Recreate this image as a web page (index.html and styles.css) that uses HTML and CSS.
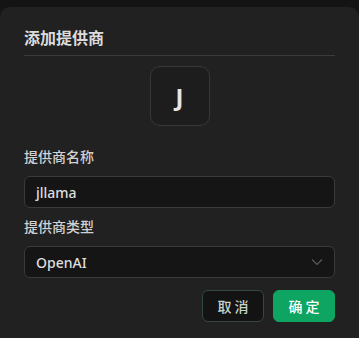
FILE: index.html
```html
<!DOCTYPE html>
<html lang="zh">
<head>
<meta charset="utf-8">
<link rel="stylesheet" href="styles.css">
</head>
<body>
<div class="dialog">
  <h2 class="title">添加提供商</h2>
  <div class="divider"></div>
  <div class="avatar-row"><div class="avatar">J</div></div>
  <label class="label label-first">提供商名称</label>
  <div class="input">jllama</div>
  <label class="label">提供商类型</label>
  <div class="input select">
    <span>OpenAI</span>
    <svg class="chev" width="12" height="8" viewBox="0 0 12 8"><path d="M1 1.5 L6 6.5 L11 1.5" fill="none" stroke="#5a5a5a" stroke-width="1.2"/></svg>
  </div>
  <div class="actions">
    <button class="btn btn-cancel">取消</button>
    <button class="btn btn-ok">确定</button>
  </div>
</div>
</body>
</html>
```
FILE: styles.css
```css
html, body {
  margin: 0;
  padding: 0;
  background: #141414;
  height: 100%;
  overflow: hidden;
}
body {
  font-family: "Noto Sans CJK SC", "Noto Sans", sans-serif;
}
.dialog {
  box-sizing: border-box;
  margin-top: 7px;
  background: #212121;
  border-radius: 10px 10px 0 0;
  padding: 18px 24px 0 24px;
  height: calc(100% - 7px);
  display: flex;
  flex-direction: column;
}
.title {
  margin: 0;
  font-size: 16px;
  line-height: 24px;
  font-weight: 700;
  color: #dcdcdc;
}
.divider {
  margin-top: 6px;
  height: 1px;
  background: #3c3c3c;
}
.avatar-row {
  display: flex;
  justify-content: center;
  margin-top: 10px;
}
.avatar {
  width: 58px;
  height: 58px;
  border: 1px solid #383838;
  border-radius: 10px;
  background: #1d1d1d;
  display: flex;
  align-items: center;
  justify-content: center;
  font-family: "Noto Sans", sans-serif;
  font-weight: 700;
  font-size: 24px;
  color: #e6e6e6;
}
.label {
  display: block;
  margin-top: 8px;
  font-size: 14px;
  line-height: 20px;
  font-weight: 500;
  color: #d2d2d2;
}
.label-first {
  margin-top: 20px;
}
.input {
  margin-top: 10px;
  height: 30px;
  flex-shrink: 0;
  border: 1px solid #3a3a3a;
  border-radius: 6px;
  background: #151515;
  padding: 0 11px;
  display: flex;
  align-items: center;
  font-family: "Noto Sans", sans-serif;
  font-size: 14px;
  font-weight: 500;
  color: #dedede;
}
.select {
  justify-content: space-between;
}
.actions {
  margin-top: 12px;
  display: flex;
  justify-content: flex-end;
  gap: 9px;
}
.btn {
  width: 62px;
  height: 32px;
  border-radius: 6px;
  font-family: "Noto Sans CJK SC", sans-serif;
  font-size: 14px;
  font-weight: 500;
  letter-spacing: 3px;
  padding: 0 0 0 3px;
  cursor: pointer;
}
.btn-cancel {
  background: #131313;
  border: 1px solid #35483c;
  color: #c5d3ca;
}
.btn-ok {
  background: #0ea462;
  border: 1px solid #0ea462;
  color: #ffffff;
}
```
